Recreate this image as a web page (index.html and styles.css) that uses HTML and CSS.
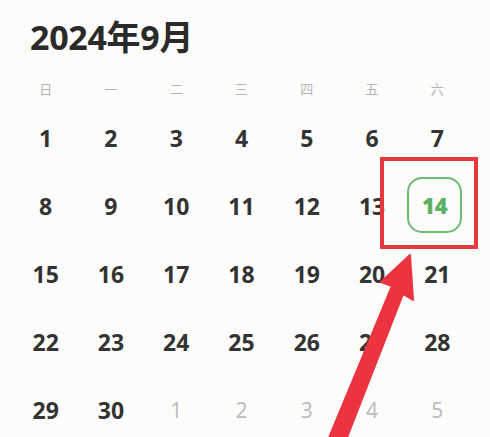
FILE: index.html
```html
<!DOCTYPE html>
<html lang="zh">
<head>
<meta charset="utf-8">
<link rel="stylesheet" href="styles.css">
</head>
<body>
<div class="page">
  <h1 class="title">2024年9月</h1>
  <div class="weekdays">
    <span>日</span><span>一</span><span>二</span><span>三</span><span>四</span><span>五</span><span>六</span>
  </div>
  <div class="days">
    <span>1</span><span>2</span><span>3</span><span>4</span><span>5</span><span>6</span><span>7</span>
    <span>8</span><span>9</span><span>10</span><span>11</span><span>12</span><span>13</span><span class="today"><b>14</b></span>
    <span>15</span><span>16</span><span>17</span><span>18</span><span>19</span><span>20</span><span>21</span>
    <span>22</span><span>23</span><span>24</span><span>25</span><span>26</span><span>27</span><span>28</span>
    <span>29</span><span>30</span><span class="other">1</span><span class="other">2</span><span class="other">3</span><span class="other">4</span><span class="other">5</span>
  </div>
  <div class="highlight"></div>
  <svg class="arrow" width="490" height="437" viewBox="0 0 490 437">
    <polygon points="326,445 392,286 381,282 410,255 413,300 403,294 344,445" fill="#ec3441" stroke="#ec3441" stroke-width="2" stroke-linejoin="round"/>
  </svg>
</div>
</body>
</html>
```
FILE: styles.css
```css
html, body {
  margin: 0;
  padding: 0;
  background: #fcfcfa;
}
.page {
  position: relative;
  width: 490px;
  height: 437px;
  overflow: hidden;
  box-sizing: border-box;
  padding: 17px 20px 0 13px;
  font-family: "Noto Sans", "Noto Sans CJK SC", sans-serif;
}
.title {
  margin: 0 0 15px 17px;
  height: 40px;
  line-height: 40px;
  font-size: 34px;
  font-weight: 700;
  color: #2a2a2a;
  font-family: "Noto Sans", "Noto Sans CJK SC", sans-serif;
  letter-spacing: -0.3px;
}
.weekdays, .days {
  display: grid;
  grid-template-columns: repeat(7, 1fr);
}
.weekdays span {
  height: 32px;
  display: flex;
  align-items: center;
  justify-content: center;
  font-size: 13px;
  color: #b4b4b4;
  font-family: "Noto Sans CJK SC", sans-serif;
}
.days span {
  height: 68px;
  display: flex;
  align-items: center;
  justify-content: center;
  font-size: 23px;
  font-weight: 700;
  color: #333;
}
.days span.other {
  font-weight: 400;
  color: #bdbdbd;
  font-size: 21px;
}
.days span.today b {
  width: 55px;
  height: 56px;
  box-sizing: border-box;
  border: 2px solid #6dbb74;
  border-radius: 15px;
  display: flex;
  align-items: center;
  justify-content: center;
  color: #5fb168;
  font-size: 22px;
  margin-left: -5px;
  margin-top: -2px;
}
.highlight {
  position: absolute;
  left: 380px;
  top: 157px;
  width: 98px;
  height: 92px;
  box-sizing: border-box;
  border: 4px solid #e8383f;
}
.arrow {
  position: absolute;
  left: 0;
  top: 0;
}
```
